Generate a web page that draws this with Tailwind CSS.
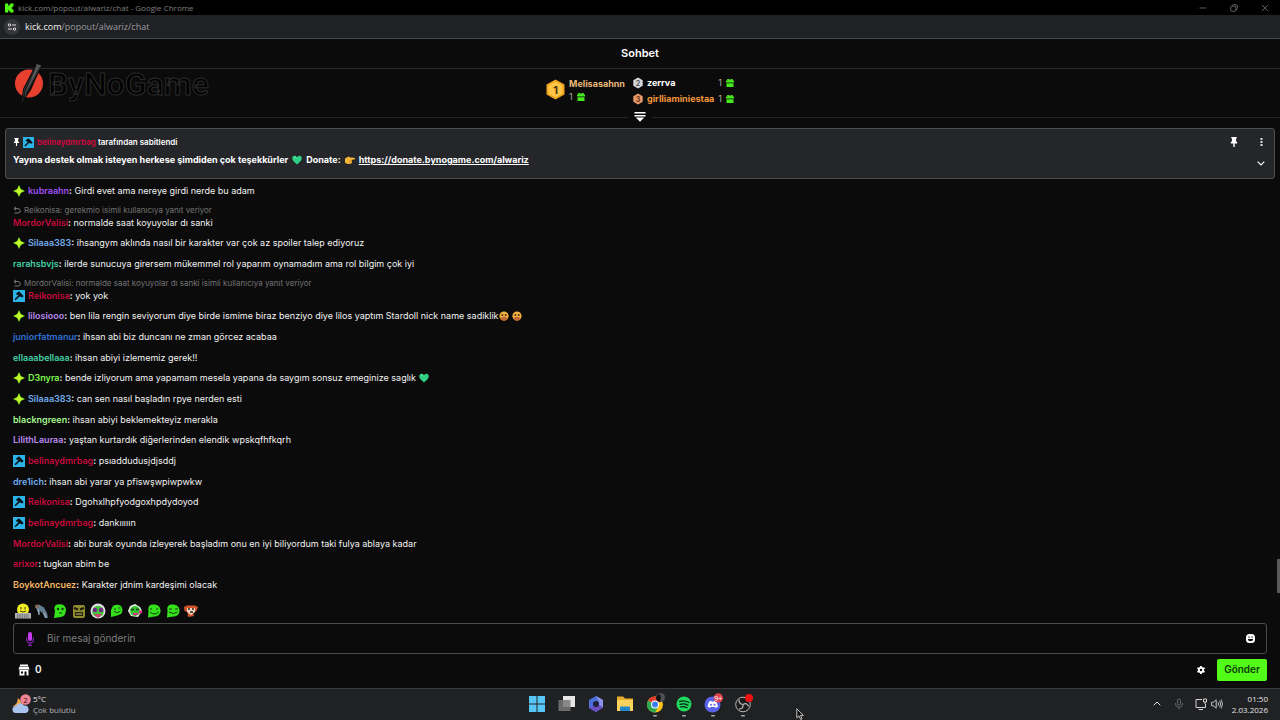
<!DOCTYPE html>
<html lang="tr">
  <head>
    <meta charset="UTF-8" />
    <meta name="viewport" content="width=device-width, initial-scale=1.0" />
    <title>kick.com/popout/alwariz/chat</title>
    <script src="https://cdn.jsdelivr.net/npm/@tailwindcss/browser@4"></script>
  </head>
  <body class="relative flex min-h-screen flex-col overflow-hidden bg-[#0b0b0b] font-['Inter',sans-serif] text-[9px] leading-[13px] text-[#f2f2f2]">
    <!-- shared icons -->
    <svg class="hidden">
      <symbol id="i-star" viewBox="0 0 12 12">
        <path d="M6 0 7.900 4.100 12 6 7.900 7.900 6 12 4.100 7.900 0 6 4.100 4.100Z" fill="#7be01c" />
        <path d="M6 1.500 7.500 4.500 10.500 6 7.500 7.500 6 10.500 4.500 7.500 1.500 6 4.500 4.500Z" fill="#c6f52e" />
      </symbol>
      <symbol id="i-mod" viewBox="0 0 12 12">
        <rect width="12" height="12" fill="#2cb4e8" />
        <path d="M5.200 1.800 6.200 1.500 10.400 5.700 10.200 6.800 9 7.400 7.800 6.800 6.600 6.600 2.600 10.300 1.500 9.300 5.200 5.600 4.800 4.800 3 4.600 3.200 3.400Z" fill="#0a1116" />
      </symbol>
      <symbol id="i-reply" viewBox="0 0 8 8">
        <path d="M3 .8 1 2.6 3 4.4M1 2.6H5A2 2 0 0 1 5 7H1.5" fill="none" stroke="#7a7a7a" stroke-width="1" />
      </symbol>
      <symbol id="i-pin" viewBox="0 0 8 10">
        <path d="M1.3 0H6.7V1.4H6V4L7.2 5.2V6.4H4.7V10H3.3V6.4H.8V5.2L2 4V1.4H1.3Z" fill="#fff" />
      </symbol>
      <symbol id="i-heart" viewBox="0 0 10 10">
        <path d="M5 9.4C1.5 6.6.2 5.2.2 3.3A2.5 2.5 0 0 1 5 2.3 2.5 2.5 0 0 1 9.8 3.3C9.8 5.2 8.5 6.6 5 9.4Z" fill="#2fcf86" />
        <path d="M2 2.2Q3 1.4 4 2.4" stroke="#8af0bf" stroke-width=".7" fill="none" />
      </symbol>
      <symbol id="i-gift" viewBox="0 0 8 8">
        <path d="M1.2 0H3L4 1 5 0H6.8V1.4H8V3.6H0V1.4H1.2ZM.5 4.2H7.5V8H.5Z" fill="#46e81f" />
      </symbol>
      <symbol id="i-pack" viewBox="0 0 14 14">
        <path d="M5 .5C9 0 13 1.500 13.500 6C14 10 11 12.500 7.500 12.500L1 13.500 1.500 7C1 3 2 1 5 .5Z" fill="#35e01c" />
      </symbol>
      <symbol id="i-face" viewBox="0 0 10 10">
        <circle cx="5" cy="5" r="4.6" fill="#f3b441" />
        <path d="M1 7Q5 4.500 9 7L7.500 9Q5 10 2.500 9Z" fill="#c26a35" />
        <circle cx="3.300" cy="4" r="1" fill="#4a2810" />
        <circle cx="6.700" cy="4" r="1" fill="#4a2810" />
      </symbol>
    </svg>

    <!-- window title -->
    <div class="flex h-[15px] items-center bg-black pr-[11px] pl-1 font-['Open_Sans',sans-serif] text-[8px] text-[#7f7f7f]">
      <svg class="mr-[4px] size-[10px]" viewBox="0 0 10 10"><path d="M1 .5H4.200V2.800H5.200V1.700H6.200V.5H9.500V3.500H8.400V4.500H7.400V5.500H8.400V6.500H9.500V9.500H6.200V8.400H5.200V7.300H4.200V9.500H1Z" fill="#53fc18" /></svg>
      <span>kick.com/popout/alwariz/chat - Google Chrome</span>
      <div class="ml-auto flex items-center gap-[23px]">
        <button aria-label="Simge durumuna küçült"><svg class="size-2" viewBox="0 0 8 8"><path d="M.5 4H7" stroke="#777" stroke-width=".8" /></svg></button>
        <button aria-label="Geri yükle"><svg class="size-2" viewBox="0 0 8 8" fill="none" stroke="#777" stroke-width=".8"><rect x=".8" y="2.200" width="5" height="5" rx=".8" /><path d="M2.400 2V1.600Q2.400.7 3.300.7H6.200Q7.300.7 7.300 1.800V4.700Q7.300 5.600 6 5.600" /></svg></button>
        <button aria-label="Kapat"><svg class="size-2" viewBox="0 0 8 8"><path d="M.8.8 7.200 7.200M7.200.8.8 7.200" stroke="#777" stroke-width=".8" /></svg></button>
      </div>
    </div>

    <!-- address bar -->
    <div class="flex h-6 items-center gap-[5px] border-b border-[#48494b] bg-[#202124] pl-1 font-['Open_Sans',sans-serif] text-[9px] text-[#9a9b9e]">
      <button class="grid size-4 place-items-center rounded-full bg-[#35363a]" aria-label="Site bilgileri">
        <svg class="size-[10px]" viewBox="0 0 10 10" fill="none" stroke="#e3e3e3"><circle cx="2.500" cy="3" r="1.200" /><path d="M5 3H9M1 7H5" /><circle cx="7.500" cy="7" r="1.200" /></svg>
      </button>
      <span><span class="text-[#f1f1f1]">kick.com</span>/popout/alwariz/chat</span>
    </div>

    <header class="flex h-[30px] items-center justify-center border-b border-[#2a2b2d]">
      <h1 class="text-[11px] font-semibold text-white">Sohbet</h1>
    </header>

    <!-- leaderboard -->
    <section class="relative flex h-[49px] justify-center gap-2 border-b border-[#252628] pt-[6px] text-[9px] leading-4 font-bold">
      <!-- stream overlay logo -->
      <div class="absolute -top-[6px] left-[14px] flex items-center gap-[5px]">
        <svg class="h-[42px] w-[29px]" viewBox="0 0 29 42">
          <circle cx="15" cy="20.500" r="14" fill="#e8402f" />
          <path d="M22 .5 28 2 17 27 7 41 9 26Z" fill="#0b0b0b" />
          <path d="M22.500 1 27.200 2.600 9.500 36 8 39.500 10 27Z" fill="#55565a" />
          <path d="M22 2 11 28 9 37" stroke="#191919" stroke-width="1.500" fill="none" />
          <path d="M26 4 12 30" stroke="#292929" stroke-width="1" fill="none" />
        </svg>
        <span class="font-['Roboto',sans-serif] text-[32px] leading-[42px] font-medium text-black [-webkit-text-stroke:1px_#2b2b2b]">ByNoGame</span>
      </div>
      <div class="flex gap-1">
        <svg class="mt-1 h-[21px] w-[19px]" viewBox="0 0 19 21">
          <path d="M9.500.5 18.500 5.500V15.500L9.500 20.500.5 15.500V5.500Z" fill="#f0a41f" />
          <path d="M9.500 2.500 16.500 6.500V14.500L9.500 18.500 2.500 14.500V6.500Z" fill="#ffc545" />
          <text x="9.500" y="14.500" text-anchor="middle" font-size="11" font-weight="700" fill="#4b3108">1</text>
        </svg>
        <div class="leading-[13px]">
          <div class="pt-[2px] text-[#e8b878]">Melisasahnn</div>
          <div class="flex items-center gap-1 font-normal text-[#aaa]">1<svg class="size-2"><use href="#i-gift" /></svg></div>
        </div>
      </div>
      <div class="grid grid-cols-[auto_auto_auto] content-start items-center gap-x-1">
        <svg class="h-3 w-[10px]" viewBox="0 0 10 12"><path d="M5 .5 9.700 3.200V8.800L5 11.500.3 8.800V3.200Z" fill="#d5d7da" /><text x="5" y="8.500" text-anchor="middle" font-size="7" font-weight="700" fill="#4e5258">2</text></svg>
        <span class="text-white">zerrva</span>
        <span class="flex items-center gap-1 font-normal text-[#aaa]">1<svg class="size-2"><use href="#i-gift" /></svg></span>
        <svg class="h-3 w-[10px]" viewBox="0 0 10 12"><path d="M5 .5 9.700 3.200V8.800L5 11.500.3 8.800V3.200Z" fill="#e79a69" /><text x="5" y="8.500" text-anchor="middle" font-size="7" font-weight="700" fill="#6c3315">3</text></svg>
        <span class="text-[#f2953d]">girlliaminiestaa</span>
        <span class="flex items-center gap-1 font-normal text-[#aaa]">1<svg class="size-2"><use href="#i-gift" /></svg></span>
      </div>
      <button class="absolute -bottom-[7px] left-1/2 grid h-[14px] w-6 -translate-x-1/2 place-items-center bg-[#0b0b0b]" aria-label="Genişlet">
        <svg class="h-[10px] w-3" viewBox="0 0 12 10"><path d="M.5 0H11.500V1.600H.5ZM.5 3H11.500V4.600H.5ZM1.800 5.600H10.200L6 9.800Z" fill="#fff" /></svg>
      </button>
    </section>

    <!-- pinned message -->
    <section class="mx-[5px] mt-[10px] flex h-[51px] justify-between rounded-[3px] border border-[#4b4d50] bg-[#24262a] px-[7px] pt-[6px] font-semibold text-white">
      <div>
        <div class="flex items-center gap-[3px] text-[8px] leading-[14px]">
          <svg class="h-2 w-[7px]"><use href="#i-pin" /></svg>
          <svg class="size-[11px]"><use href="#i-mod" /></svg>
          <span><span class="font-bold text-[#c40a3c]">belinaydmrbag</span> tarafından sabitlendi</span>
        </div>
        <p class="flex items-center pt-[3px] text-[9px] leading-4 font-bold">
          Yayına destek olmak isteyen herkese şimdiden çok teşekkürler
          <svg class="mx-1 size-[10px]"><use href="#i-heart" /></svg>
          Donate:
          <svg class="mx-1 size-[10px]" viewBox="0 0 10 10"><path d="M0 3.500 3.500 1.500 5 2.500 9.500 2.800Q10.300 3.800 9.500 4.500L6.800 4.700 7 8Q5 9.500 2.500 8.800L0 8Z" fill="#f7b73a" /><path d="M4 5.800H7M4 7.200H7" stroke="#bd7a18" stroke-width=".5" /></svg>
          <a href="https://donate.bynogame.com/alwariz" class="underline">https://donate.bynogame.com/alwariz</a>
        </p>
      </div>
      <div class="flex flex-col gap-[10px] pt-[2px]">
        <div class="flex gap-[17px]">
          <button aria-label="Sabitlenen mesaj"><svg class="h-[10px] w-2"><use href="#i-pin" /></svg></button>
          <button class="grid w-3 place-items-center" aria-label="Diğer"><svg class="h-2 w-[3px]" viewBox="0 0 3 8"><path d="M.5 0H2.500V2H.5ZM.5 3H2.500V5H.5ZM.5 6H2.500V8H.5Z" fill="#ddd" /></svg></button>
        </div>
        <button class="ml-auto grid h-3 w-3 place-items-center" aria-label="Mesajı genişlet"><svg class="h-[5px] w-2" viewBox="0 0 8 5"><path d="M.7.7 4 4 7.300.7" fill="none" stroke="#fff" stroke-width="1.200" /></svg></button>
      </div>
    </section>

    <!-- messages -->
    <ul class="flex grow flex-col justify-between px-[13px] pt-[5px] pb-3 [&_b]:font-semibold [&_b+span]:font-semibold [&>li>svg]:mr-[3px] [&>li>svg]:inline [&>li>svg]:size-3 [&>li>svg]:align-[-3px] [&_p]:flex [&_p]:h-[11px] [&_p]:items-center [&_p]:gap-[3px] [&_p]:text-[8px] [&_p]:text-[#737373] [&_p_svg]:size-2">
      <li><svg><use href="#i-star" /></svg><b class="text-[#a04ff5]">kubraahn</b><span>:</span> Girdi evet ama nereye girdi nerde bu adam</li>
      <li>
        <p><svg><use href="#i-reply" /></svg>Reikonisa: gerekmio isimli kullanıcıya yanıt veriyor</p>
        <b class="text-[#c40a3c]">MordorValisi</b><span>:</span> normalde saat koyuyolar dı sanki
      </li>
      <li><svg><use href="#i-star" /></svg><b class="text-[#72acee]">Silaaa383</b><span>:</span> ihsangym aklında nasıl bir karakter var çok az spoiler talep ediyoruz</li>
      <li><b class="text-[#42cfa6]">rarahsbvjs</b><span>:</span> ilerde sunucuya girersem mükemmel rol yaparım oynamadım ama rol bilgim çok iyi</li>
      <li>
        <p><svg><use href="#i-reply" /></svg>MordorValisi: normalde saat koyuyolar dı sanki isimli kullanıcıya yanıt veriyor</p>
        <svg><use href="#i-mod" /></svg><b class="text-[#c40a3c]">Reikonisa</b><span>:</span> yok yok
      </li>
      <li class="[&>svg~svg]:size-[10px]! [&>svg~svg]:align-[-2px]!"><svg><use href="#i-star" /></svg><b class="text-[#b98af0]">lilosiooo</b><span>:</span> ben lila rengin seviyorum diye birde ismime biraz benziyo diye lilos yaptım Stardoll nick name sadiklik<svg><use href="#i-face" /></svg><svg><use href="#i-face" /></svg></li>
      <li><b class="text-[#2f70d4]">juniorfatmanur</b><span>:</span> ihsan abi biz duncanı ne zman görcez acabaa</li>
      <li><b class="text-[#42cfa6]">ellaaabellaaa</b><span>:</span> ihsan abiyi izlememiz gerek!!</li>
      <li class="[&>svg~svg]:size-[10px]! [&>svg~svg]:align-[-2px]!"><svg><use href="#i-star" /></svg><b class="text-[#7ff94c]">D3nyra</b><span>:</span> bende izliyorum ama yapamam mesela yapana da saygım sonsuz emeginize saglık <svg><use href="#i-heart" /></svg></li>
      <li><svg><use href="#i-star" /></svg><b class="text-[#72acee]">Silaaa383</b><span>:</span> can sen nasıl başladın rpye nerden esti</li>
      <li><b class="text-[#a4f88c]">blackngreen</b><span>:</span> ihsan abiyi beklemekteyiz merakla</li>
      <li><b class="text-[#b98af0]">LilithLauraa</b><span>:</span> yaştan kurtardık diğerlerinden elendik wpskqfhfkqrh</li>
      <li><svg><use href="#i-mod" /></svg><b class="text-[#c40a3c]">belinaydmrbag</b><span>:</span> psıaddudusjdjsddj</li>
      <li><b class="text-[#72acee]">dre1ich</b><span>:</span> ihsan abi yarar ya pfiswşwpiwpwkw</li>
      <li><svg><use href="#i-mod" /></svg><b class="text-[#c40a3c]">Reikonisa</b><span>:</span> Dgohxlhpfyodgoxhpdydoyod</li>
      <li><svg><use href="#i-mod" /></svg><b class="text-[#c40a3c]">belinaydmrbag</b><span>:</span> dankııııın</li>
      <li><b class="text-[#c40a3c]">MordorValisi</b><span>:</span> abi burak oyunda izleyerek başladım onu en iyi biliyordum taki fulya ablaya kadar</li>
      <li><b class="text-[#c40a3c]">arixor</b><span>:</span> tugkan abim be</li>
      <li><b class="text-[#f3b765]">BoykotAncuez</b><span>:</span> Karakter jdnim kardeşimi olacak</li>
    </ul>
    <div class="absolute right-0 bottom-[127px] h-[34px] w-[3px] bg-[#58595b]"></div>

    <!-- quick emotes -->
    <div class="ml-[14px] grid w-[187px] grid-cols-10 [&_svg]:h-4 [&_svg]:w-[17px]">
      <button aria-label="Emote 1"><svg viewBox="0 0 17 16"><circle cx="9" cy="6.500" r="6" fill="#f2ee24" /><path d="M1 10H17V15.500H1Z" fill="#aeb0b2" /><path d="M3 12H15M3 14H15" stroke="#55575a" stroke-dasharray="1.500 .8" /><path d="M7 4V6.500M11 4V6.500M6 8Q9 10 12 8" stroke="#413a08" fill="none" /></svg></button>
      <button aria-label="Emote 2"><svg viewBox="0 0 17 16"><path d="M2 3 6 1.500 11 4.500 14 10 15 15H12L9.500 10 7 8 6.500 12 4.500 8Z" fill="#637d90" /><circle cx="4" cy="3.500" r="2" fill="#8b6a5c" /><path d="M5 6 6 12M11 10 13 15" stroke="#a8b6be" /></svg></button>
      <button aria-label="Emote 3"><svg viewBox="0 0 17 16"><path d="M6 1.500Q14 0 15 6.500 15 13 10 14L3 15 4 8Q2 3 6 1.500Z" fill="#35e01c" /><circle cx="7" cy="6" r="1.200" fill="#123b0c" /><circle cx="11.500" cy="6" r="1.200" fill="#123b0c" /><path d="M8 10H11" stroke="#123b0c" /></svg></button>
      <button aria-label="Emote 4"><svg viewBox="0 0 17 16"><rect x="3" y="2" width="12" height="13" rx="2" fill="#8f8c30" /><path d="M4 5 8 6.500M14 5 10 6.500" stroke="#1c1b0b" stroke-width="2" /><rect x="5" y="9" width="8" height="4" fill="#26230f" /><path d="M6 11H12" stroke="#c5bd63" /></svg></button>
      <button aria-label="Emote 5"><svg viewBox="0 0 17 16"><circle cx="9" cy="8" r="7.500" fill="#e8d9ea" /><circle cx="9" cy="8.500" r="5.800" fill="#3fc63a" /><circle cx="6" cy="7" r="2.200" fill="#73258a" /><circle cx="12" cy="7" r="2.200" fill="#73258a" /><path d="M5 11H13L9 15Z" fill="#d83d74" /></svg></button>
      <button aria-label="Emote 6"><svg viewBox="0 0 17 16"><path d="M5 3Q9 .5 13 3 16 7 13 11 9 13 3 14L3 7Z" fill="#35e01c" /><path d="M6 6H8M10.500 5H12.500M6 8.500Q10 11 12.500 8" stroke="#123b0c" fill="none" /></svg></button>
      <button aria-label="Emote 7"><svg viewBox="0 0 17 16"><path d="M9 1 14 4 16 8 12 14 5 13 2 8 4 3Z" fill="#e7ece4" /><circle cx="9" cy="8" r="5" fill="#35c431" /><path d="M5 6.500H8M10 6.500H13" stroke="#163e13" stroke-width="1.500" /><path d="M7 11H12" stroke="#d7327d" stroke-width="2" /><circle cx="14.500" cy="9" r="1.800" fill="#d7327d" /></svg></button>
      <button aria-label="Emote 8"><svg viewBox="0 0 17 16"><use href="#i-pack" x="2" y="1" width="14" height="14" /><path d="M6 5V7M12 5V7M5 9Q9.500 13 13.500 9" stroke="#123b0c" fill="none" /></svg></button>
      <button aria-label="Emote 9"><svg viewBox="0 0 17 16"><use href="#i-pack" x="2" y="1" width="14" height="14" /><path d="M5 6H8M11 6H14M5 9Q9.500 12 13.500 9" stroke="#123b0c" fill="none" /></svg></button>
      <button aria-label="Emote 10"><svg viewBox="0 0 17 16"><path d="M2 4 5 2.500H13L16 4 14.500 8 11 9.500 12 13 6 14 5.500 9 2.500 8Z" fill="#d5542d" /><path d="M5 5H13V9L9 12 5 9Z" fill="#efd6bd" /><path d="M6 6H8M10 6H12M8 9H11" stroke="#33201a" stroke-width="1.500" /></svg></button>
    </div>

    <!-- message box -->
    <form class="mt-1 px-[13px] pb-[3px]">
      <label class="flex h-[31px] items-center rounded-[3px] border border-[#4a4b4d] pr-[11px] pl-3">
        <svg class="h-[14px] w-2" viewBox="0 0 8 14"><rect x="2" y="0" width="4" height="9" rx="2" fill="#c63df0" /><path d="M.6 5.500V7.500A3.400 3.400 0 0 0 7.400 7.500V5.500M4 11V13.300M2 13.300H6" fill="none" stroke="#7d1fa8" stroke-width="1.200" /></svg>
        <input type="text" aria-label="Mesaj" placeholder="Bir mesaj gönderin" class="ml-[13px] grow bg-transparent text-[10px] outline-none placeholder:text-[#7d7d7d]" />
        <button type="button" aria-label="Emoji"><svg class="size-[9px]" viewBox="0 0 9 9"><rect width="9" height="9" rx="3.500" fill="#fff" /><path d="M2.400 2.500H3.600V3.700H2.400ZM5.400 2.500H6.600V3.700H5.400ZM1.800 5H7.200Q7 7.300 4.500 7.300 2 7.300 1.800 5Z" fill="#0b0b0b" /></svg></button>
      </label>
      <div class="flex h-[31px] items-center pl-[5px]">
        <svg class="size-3" viewBox="0 0 12 12"><path d="M2 .5H10V2H2ZM1.500 2.500H10.500L11.500 5.500H.5ZM1.500 6H10.500V11.500H8.500V7.500H6.500V11.500H1.500ZM3 7.500V9.500H5V7.500Z" fill="#fff" fill-rule="evenodd" /></svg>
        <span class="ml-[5px] text-[10px] font-semibold">0</span>
        <button type="button" class="mr-3 ml-auto" aria-label="Ayarlar"><svg class="size-2" viewBox="0 0 8 8"><path d="M3.200 0H4.800L5 1.100 6 1.600 7.100 1.200 7.900 2.600 7 3.400V4.600L7.900 5.400 7.100 6.800 6 6.400 5 6.900 4.800 8H3.200L3 6.900 2 6.400.9 6.800.1 5.400 1 4.600V3.400L.1 2.600.9 1.200 2 1.600 3 1.100ZM4 2.800A1.200 1.200 0 1 0 4 5.200 1.200 1.200 0 0 0 4 2.800Z" fill="#fff" fill-rule="evenodd" /></svg></button>
        <button type="submit" class="h-[22px] rounded-[2px] bg-[#53fc18] px-[7px] text-[10px] font-semibold text-[#0c3a05]">Gönder</button>
      </div>
    </form>

    <!-- taskbar -->
    <footer class="grid h-8 grid-cols-[1fr_auto_1fr] items-center border-t border-[#39393b] bg-[#202123] pr-3 pb-[2px] pl-3 font-['Open_Sans',sans-serif] text-[8px] leading-[11px] text-[#e4e4e4]">
      <div class="flex items-center gap-[2px]">
        <svg class="h-5 w-[19px]" viewBox="0 0 19 20">
          <path d="M0 12Q5 12 6 4 11 8 9 14Z" fill="#e9a544" />
          <path d="M4 19A3.500 3.500 0 0 1 4 12 4.500 4.500 0 0 1 12 11.500 3.800 3.800 0 1 1 13.500 19Z" fill="#a9c3ee" />
          <circle cx="13.500" cy="5.500" r="5.300" fill="#ef8492" /><text x="13.500" y="8.500" text-anchor="middle" font-size="8" fill="#3d1118">2</text>
        </svg>
        <div>5°C<br /><span class="text-[#b5b5b5]">Çok bulutlu</span></div>
      </div>
      <div class="grid w-[235px] grid-cols-8 justify-items-center [&_svg]:h-[26px] [&_svg]:w-5">
        <button aria-label="Başlat"><svg viewBox="0 0 20 26"><path d="M2 5H9.500V12.500H2ZM10.500 5H18V12.500H10.500ZM2 13.500H9.500V21H2ZM10.500 13.500H18V21H10.500Z" fill="#58c6f7" /></svg></button>
        <button aria-label="Görev görünümü"><svg viewBox="0 0 20 26"><rect x="6" y="5" width="12" height="11" fill="#e6e6e6" /><rect x="1.500" y="9" width="12" height="11" fill="#777" fill-opacity=".85" /></svg></button>
        <button aria-label="Copilot"><svg viewBox="0 0 20 26"><path d="M10 5 17 9V16.500L10 21 3 17V9Z" fill="#4a6fd8" /><path d="M10 5 17 9V16.500L13 14V11Z" fill="#8d92e8" /><path d="M17 16.500 10 21 3 17 7 15 13 14Z" fill="#6b4fc0" /><circle cx="10" cy="13" r="3" fill="#20203a" /></svg></button>
        <button aria-label="Dosya Gezgini"><svg viewBox="0 0 20 26"><path d="M2 5.500H8L10 7.500H18V20H2Z" fill="#e6ae2c" /><path d="M2 9H18V20H2Z" fill="#fbd25c" /><path d="M5 20V16.500Q5 15.500 6 15.500H14Q15 15.500 15 16.500V20Z" fill="#2587c8" /></svg></button>
        <button aria-label="Chrome"><svg viewBox="0 0 20 26"><circle cx="10" cy="13.500" r="8" fill="#fbc116" /><path d="M10 13.500 3.100 9.500A8 8 0 0 1 17 9.500Z" fill="#e33b2e" /><path d="M10 13.500 3.100 9.500A8 8 0 0 0 10 21.500L13.500 15.500Z" fill="#2da94f" /><circle cx="10" cy="13.500" r="4" fill="#fff" /><circle cx="10" cy="13.500" r="3" fill="#3b7ded" /><circle cx="15.500" cy="6.500" r="4.500" fill="#4f5153" /><path d="M14 2.500Q17 5 15 11 10.500 10 11.200 6Z" fill="#111" /><rect x="8" y="24" width="4" height="1.500" rx=".7" fill="#aaa" /></svg></button>
        <button aria-label="Spotify"><svg viewBox="0 0 20 26"><circle cx="10" cy="13" r="7.500" fill="#1fdb5e" /><path d="M5.500 10.500Q10 9 15 11.500M6 13.300Q10 12 14 14.200M6.500 16Q10 15 13 16.800" fill="none" stroke="#0d1a12" stroke-width="1.300" stroke-linecap="round" /><rect x="8" y="24" width="4" height="1.500" rx=".7" fill="#aaa" /></svg></button>
        <button aria-label="Discord"><svg viewBox="0 0 20 26"><circle cx="9.500" cy="13.500" r="8" fill="#5a62ea" /><path d="M6 10.500 8 9.800 8.500 10.500H11L11.500 9.800 13.500 10.500 15 15.500 12.800 17 12 16H7.500L6.700 17 4.500 15.500Z" fill="#fff" /><circle cx="8" cy="13.700" r="1" fill="#5a62ea" /><circle cx="11.500" cy="13.700" r="1" fill="#5a62ea" /><circle cx="15.300" cy="7" r="4.700" fill="#dc4550" /><text x="15.300" y="9.500" text-anchor="middle" font-size="7" fill="#fff">9+</text><rect x="8" y="24" width="4" height="1.500" rx=".7" fill="#aaa" /></svg></button>
        <button aria-label="OBS"><svg viewBox="0 0 20 26"><circle cx="10" cy="13.500" r="7.300" fill="#1c1c1e" stroke="#b9b9b9" /><path d="M10 13.500Q5.500 13 6 8.500M10 13.500Q14 11 15.500 15.500M10 13.500Q10.500 18 6 18" fill="none" stroke="#b9b9b9" stroke-width="1.200" /><circle cx="16" cy="7" r="4" fill="#ee1111" /><rect x="8" y="24" width="4" height="1.500" rx=".7" fill="#aaa" /></svg></button>
      </div>
      <div class="flex items-center justify-end">
        <button aria-label="Gizli simgeler"><svg class="h-[5px] w-2" viewBox="0 0 8 5"><path d="M.7 4.300 4 1 7.300 4.300" fill="none" stroke="#e4e4e4" /></svg></button>
        <svg class="ml-[14px] h-3 w-2" viewBox="0 0 8 12" fill="none" stroke="#68696b"><rect x="2.500" y="1" width="3" height="6" rx="1.500" /><path d="M.6 5V6A3.400 3.400 0 0 0 7.400 6V5M4 9.300V11.500" /></svg>
        <svg class="ml-3 size-3" viewBox="0 0 12 12" fill="none" stroke="#d4d4d4"><path d="M7 1.500H1V9.500H10.500V6M3.500 11.500H8M8.500 1H11.500V4H8.500ZM10 4V6" /></svg>
        <svg class="ml-1 size-3" viewBox="0 0 12 12" fill="none" stroke="#d4d4d4" stroke-width=".9"><path d="M.6 4.200H2.500L5.200 1.800V10.200L2.500 7.800H.6ZM7 4.300Q8.200 6 7 7.700M8.600 2.800Q10.600 6 8.600 9.200M10.100 1.500Q12.800 6 10.100 10.500" /></svg>
        <div class="ml-[9px] text-right">01:50<br />2.03.2026</div>
      </div>
    </footer>

    <!-- mouse cursor -->
    <svg class="absolute bottom-0 left-[796px] h-3 w-2" viewBox="0 0 8 12"><path d="M.8.8V9.800L3 7.800 4.600 11.400 6 10.800 4.500 7.300H7.400Z" fill="#111" stroke="#eee" stroke-width=".8" /></svg>
  </body>
</html>
